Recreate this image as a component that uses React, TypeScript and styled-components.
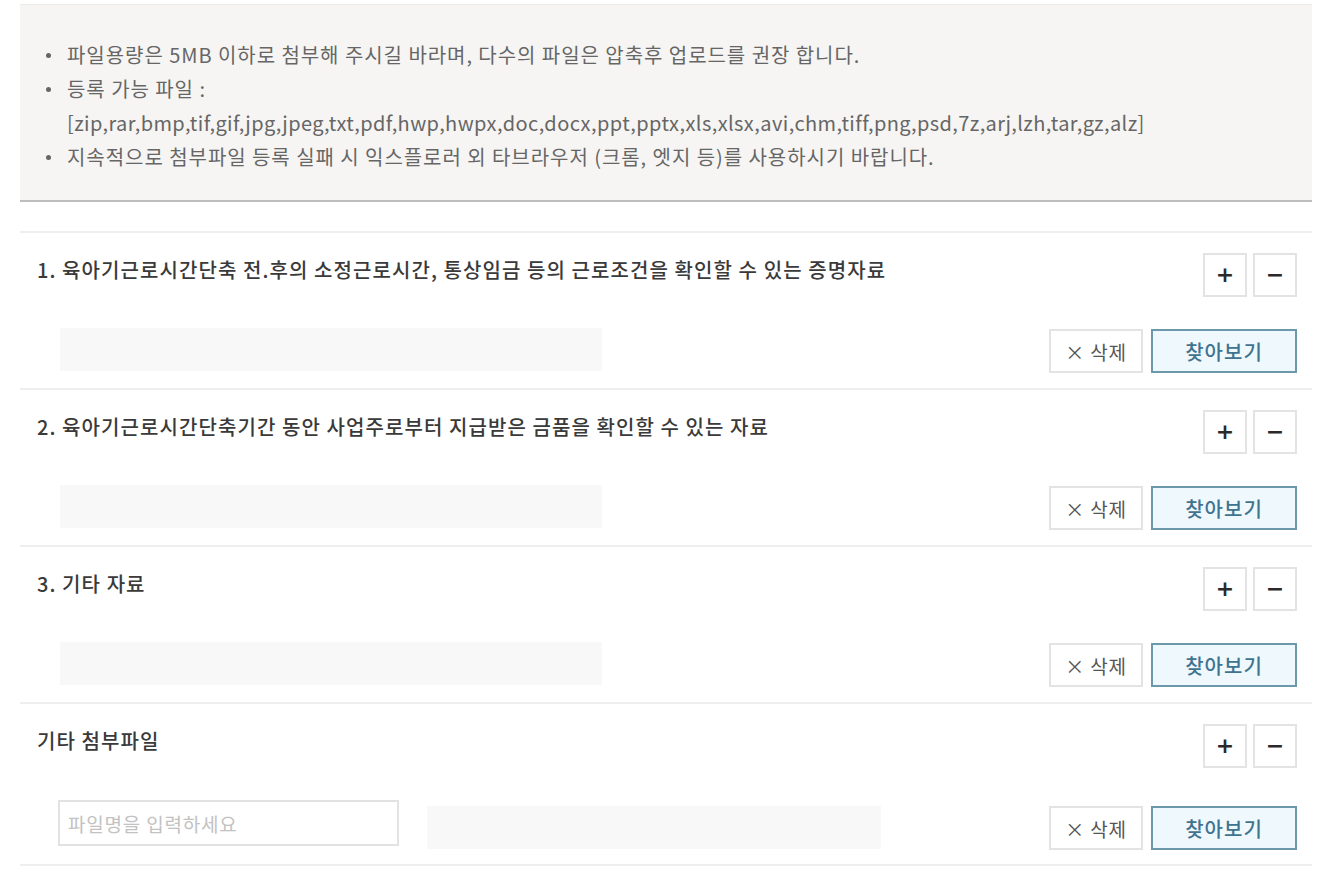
import React from 'react'
import styled, { createGlobalStyle } from 'styled-components'

const GlobalStyle = createGlobalStyle`
  body {
    margin: 0;
    background: #fff;
    font-family: "Noto Sans CJK KR", "Noto Sans", sans-serif;
  }
`

type Section = {
  title: string
  custom?: boolean
}

const notices = [
  '파일용량은 5MB 이하로 첨부해 주시길 바라며, 다수의 파일은 압축후 업로드를 권장 합니다.',
  '등록 가능 파일 :',
  '지속적으로 첨부파일 등록 실패 시 익스플로러 외 타브라우저 (크롬, 엣지 등)를 사용하시기 바랍니다.',
]

const extensions =
  '[zip,rar,bmp,tif,gif,jpg,jpeg,txt,pdf,hwp,hwpx,doc,docx,ppt,pptx,xls,xlsx,avi,chm,tiff,png,psd,7z,arj,lzh,tar,gz,alz]'

const sections: Section[] = [
  { title: '1. 육아기근로시간단축 전.후의 소정근로시간, 통상임금 등의 근로조건을 확인할 수 있는 증명자료' },
  { title: '2. 육아기근로시간단축기간 동안 사업주로부터 지급받은 금품을 확인할 수 있는 자료' },
  { title: '3. 기타 자료' },
  { title: '기타 첨부파일', custom: true },
]

export default function App() {
  return (
    <>
      <GlobalStyle />
      <Page>
        <Notice>
          <NoticeList>
            <NoticeItem>{notices[0]}</NoticeItem>
            <NoticeItem>
              {notices[1]}
              <br />
              <ExtList>{extensions}</ExtList>
            </NoticeItem>
            <NoticeItem>{notices[2]}</NoticeItem>
          </NoticeList>
        </Notice>

        <Sections>
          {sections.map((s) => (
            <FileSection key={s.title}>
              <TitleRow>
                <Title>{s.title}</Title>
                <RowControls>
                  <SquareButton>+</SquareButton>
                  <SquareButton>−</SquareButton>
                </RowControls>
              </TitleRow>
              <FileRow $custom={s.custom}>
                {s.custom && <NameInput placeholder="파일명을 입력하세요" />}
                <FileName $custom={s.custom} />
                <FileActions $custom={s.custom}>
                  <DeleteButton>× 삭제</DeleteButton>
                  <BrowseButton>찾아보기</BrowseButton>
                </FileActions>
              </FileRow>
            </FileSection>
          ))}
        </Sections>
      </Page>
    </>
  )
}

const Page = styled.div`
  padding: 4px 8px 0 20px;
`

const Notice = styled.div`
  height: 198px;
  background: #f6f5f3;
  border-top: 1px solid #ebebea;
  border-bottom: 2px solid #bdbdbd;
  box-sizing: border-box;
  padding-top: 33px;
`

const NoticeList = styled.ul`
  list-style: none;
  margin: 0;
  padding: 0 0 0 47px;
`

const NoticeItem = styled.li`
  position: relative;
  font-size: 20px;
  line-height: 34px;
  color: #666;
  letter-spacing: 0.95px;

  &::before {
    content: '';
    position: absolute;
    left: -21px;
    top: 15px;
    width: 5px;
    height: 5px;
    border-radius: 50%;
    background: #666;
  }
`

const ExtList = styled.span`
  letter-spacing: 0.4px;
`

const Sections = styled.div`
  margin-top: 29px;
`

const FileSection = styled.div`
  border-top: 2px solid #eeeeee;
  padding: 20px 15px 0 17px;

  &:last-child {
    border-bottom: 2px solid #eeeeee;
  }
`

const TitleRow = styled.div`
  display: flex;
  justify-content: space-between;
  align-items: flex-start;
`

const Title = styled.div`
  padding-top: 4px;
  font-size: 20px;
  line-height: 26px;
  font-weight: 500;
  color: #3a3a3a;
  letter-spacing: 1.08px;
`

const RowControls = styled.div`
  display: flex;
  gap: 6px;
`

const SquareButton = styled.button`
  width: 44px;
  height: 44px;
  padding: 0;
  border: 2px solid #e3e3e3;
  background: #fff;
  color: #2a2a2a;
  font-family: "DejaVu Sans", sans-serif;
  font-size: 22px;
  font-weight: 700;
  line-height: 1;
`

const FileRow = styled.div<{ $custom?: boolean }>`
  display: flex;
  align-items: flex-start;
  margin-top: ${(p) => (p.$custom ? '32px' : '31px')};
  padding-left: ${(p) => (p.$custom ? '21px' : '23px')};
  padding-bottom: ${(p) => (p.$custom ? '14px' : '15px')};
`

const NameInput = styled.input`
  width: 341px;
  height: 46px;
  box-sizing: border-box;
  border: 2px solid #e2e2e2;
  padding: 0 8px;
  font-family: inherit;
  font-size: 19px;
  letter-spacing: 0.8px;
  color: #333;

  &::placeholder {
    color: #c2c2c2;
  }
`

const FileName = styled.div<{ $custom?: boolean }>`
  width: ${(p) => (p.$custom ? '454px' : '542px')};
  height: 43px;
  margin-top: ${(p) => (p.$custom ? '6px' : '0')};
  margin-left: ${(p) => (p.$custom ? '28px' : '0')};
  background: #f8f8f8;
`

const FileActions = styled.div<{ $custom?: boolean }>`
  display: flex;
  gap: 8px;
  margin-left: auto;
  margin-top: ${(p) => (p.$custom ? '6px' : '1px')};
`

const DeleteButton = styled.button`
  width: 94px;
  height: 44px;
  border: 2px solid #e3e3e3;
  background: #fff;
  color: #555;
  font-family: inherit;
  font-size: 19px;
  letter-spacing: 0.8px;
  padding: 0;
`

const BrowseButton = styled.button`
  width: 146px;
  height: 44px;
  border: 2px solid #6b98aa;
  background: #eff8fc;
  color: #3f7390;
  font-family: inherit;
  font-size: 20px;
  font-weight: 500;
  letter-spacing: 1px;
  padding: 0;
`
